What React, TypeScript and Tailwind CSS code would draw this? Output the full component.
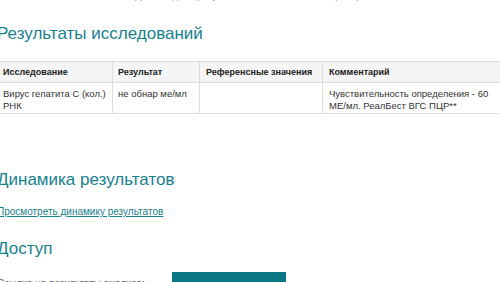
export default function App() {
  return (
    <div className="w-[500px] h-[282px] overflow-hidden bg-white font-['Liberation_Sans',Arial,sans-serif]">
      <div className="-ml-[3px] w-[520px]">
        {/* cut-off line from the block above */}
        <p className="-mt-[10px] pl-[138px] text-[10px] leading-[11px] text-[#9a9a9a] whitespace-nowrap">
          Дата выдачи результата: 12.03.2021 · Лаборатория · Заказ № 1283742
        </p>

        <h2 className="mt-[23px] text-[17px] leading-[20px] text-[#17808d]">Результаты исследований</h2>

        <table className="mt-[17px] w-[520px] table-fixed border-collapse text-[#222]">
          <colgroup>
            <col className="w-[115px]" />
            <col className="w-[87px]" />
            <col className="w-[123px]" />
            <col />
          </colgroup>
          <thead>
            <tr className="bg-[#f5f5f5] h-[21px] text-[9px] leading-[11px]">
              <th className="border border-[#dddddd] pl-[5px] text-left font-bold">Исследование</th>
              <th className="border border-[#dddddd] pl-[5px] text-left font-bold">Результат</th>
              <th className="border border-[#dddddd] pl-[6px] text-left font-bold whitespace-nowrap">Референсные значения</th>
              <th className="border border-[#dddddd] pl-[6px] text-left font-bold">Комментарий</th>
            </tr>
          </thead>
          <tbody>
            <tr className="h-[31px] align-top text-[9.5px] leading-[12px] text-[#333]">
              <td className="border border-[#dddddd] pl-[5px] pt-[5px]">Вирус гепатита С (кол.) РНК</td>
              <td className="border border-[#dddddd] pl-[5px] pt-[5px]">не обнар ме/мл</td>
              <td className="border border-[#dddddd]" />
              <td className="border border-[#dddddd] pl-[6px] pt-[5px] pr-[18px]">
                Чувствительность определения - 60 МЕ/мл. РеалБест ВГС ПЦР**
              </td>
            </tr>
          </tbody>
        </table>

        <h2 className="mt-[56px] text-[17px] leading-[20px] text-[#17808d]">Динамика результатов</h2>

        <a href="#" className="mt-[16px] block w-fit text-[10px] leading-[12px] text-[#17808d] underline">
          Просмотреть динамику результатов
        </a>

        <h2 className="mt-[21px] text-[17px] leading-[20px] text-[#17808d]">Доступ</h2>

        <div className="mt-[13px] flex items-start">
          <span className="w-[175px] pt-[6px] text-[10px] leading-[12px] text-[#666] whitespace-nowrap">Ссылка на результаты анализа:</span>
          <button className="w-[114px] h-[34px] bg-[#0b7684] text-white text-[11px]">Поделиться</button>
        </div>
      </div>
    </div>
  );
}
